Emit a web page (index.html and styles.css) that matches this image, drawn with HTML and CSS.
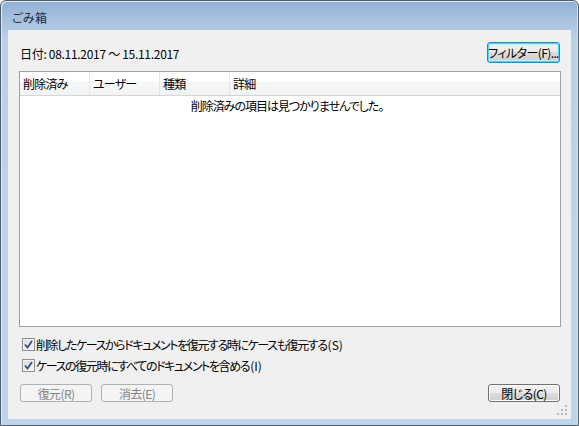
FILE: index.html
```html
<!DOCTYPE html>
<html lang="ja">
<head>
<meta charset="utf-8">
<title>ごみ箱</title>
<link rel="stylesheet" href="styles.css">
</head>
<body>
<div class="window">
  <div class="titlebar"><span class="title">ごみ箱</span></div>
  <div class="client">
    <div class="toprow">
      <span class="date">日付: 08.11.2017 ～ 15.11.2017</span>
      <button class="btn focus">フィルター(F)...</button>
    </div>
    <div class="list">
      <div class="header">
        <div class="col">削除済み</div>
        <div class="col">ユーザー</div>
        <div class="col">種類</div>
        <div class="col last">詳細</div>
      </div>
      <div class="empty">削除済みの項目は見つかりませんでした。</div>
    </div>
    <div class="checks">
      <label class="check"><span class="box"><svg width="9" height="9" viewBox="0 0 9 9"><path d="M1 4.5 L3.5 7.5 L8 1" fill="none" stroke="#3b4f86" stroke-width="1.8"/></svg></span>削除したケースからドキュメントを復元する時にケースも復元する<span class="acc">(S)</span></label>
      <label class="check"><span class="box"><svg width="9" height="9" viewBox="0 0 9 9"><path d="M1 4.5 L3.5 7.5 L8 1" fill="none" stroke="#3b4f86" stroke-width="1.8"/></svg></span>ケースの復元時にすべてのドキュメントを含める<span class="acc">(I)</span></label>
    </div>
    <div class="bottomrow">
      <button class="btn disabled">復元(R)</button>
      <button class="btn disabled">消去(E)</button>
      <span class="spacer"></span>
      <button class="btn">閉じる(C)</button>
    </div>
    <svg class="grip" width="12" height="12" viewBox="0 0 12 12">
      <g fill="#b8b8b8">
        <rect x="9" y="1" width="2" height="2"/>
        <rect x="5" y="5" width="2" height="2"/><rect x="9" y="5" width="2" height="2"/>
        <rect x="1" y="9" width="2" height="2"/><rect x="5" y="9" width="2" height="2"/><rect x="9" y="9" width="2" height="2"/>
      </g>
    </svg>
  </div>
</div>
</body>
</html>
```

FILE: styles.css
```css
* { box-sizing: border-box; }
html, body { margin: 0; padding: 0; background: #ffffff; }
body {
  font-family: "Noto Sans CJK JP", "Noto Sans", sans-serif;
  font-size: 12px;
  font-feature-settings: "palt";
  color: #000;
}
.window {
  width: 579px;
  height: 426px;
  border: 1px solid #4d5d6e;
  border-radius: 6px 6px 0 0;
  background: linear-gradient(to bottom, #93b0d2 0px, #a9c2df 20px, #bad1ea 40px, #bcd4ec 100%);
  padding: 0 7px 6px 7px;
  display: flex;
  flex-direction: column;
  box-shadow: inset 1px 1px 0 #e3ecf6, inset -1px 0 0 #d7e4f2;
}
.titlebar {
  height: 29px;
  display: flex;
  align-items: center;
  padding-left: 4px;
  padding-top: 3px;
}
.title { font-size: 12px; color: #1b2b40; letter-spacing: 0.3px; }
.client {
  flex: 1;
  background: #f0f0f0;
  display: flex;
  flex-direction: column;
  padding: 12px 11px 0 11px;
  position: relative;
}
.toprow {
  display: flex;
  justify-content: space-between;
  align-items: center;
  height: 21px;
}
.date { padding-left: 1px; padding-top: 1px; letter-spacing: -0.3px; }
.btn {
  font-family: inherit;
  font-size: 12px;
  font-feature-settings: "palt";
  letter-spacing: -0.6px;
  white-space: nowrap;
  width: 72px;
  height: 21px;
  padding: 0;
  border: 1px solid #707070;
  border-radius: 3px;
  background: linear-gradient(to bottom, #f2f2f2 0%, #ebebeb 50%, #dddddd 50%, #cfcfcf 100%);
  box-shadow: inset 0 0 0 1px #fcfcfc;
  color: #000;
  line-height: 17px;
}
.btn.focus {
  border-color: #3c7fb1;
  box-shadow: inset 0 0 0 1px #48d8fb, inset 0 0 0 2px #c3ecfb;
  width: 73px;
}
.btn.disabled {
  border-color: #adb2b5;
  background: #f4f4f4;
  box-shadow: none;
  color: #838383;
}
.list {
  margin-top: 8px;
  height: 256px;
  background: #fff;
  border: 1px solid #a0a0a0;
  width: 542px;
}
.header {
  display: flex;
  height: 24px;
  background: linear-gradient(to bottom, #ffffff 0%, #ffffff 40%, #f6f7f9 45%, #f1f2f4 100%);
  border-bottom: 1px solid #d5d5d5;
  letter-spacing: -0.8px;
}
.col {
  width: 70px;
  border-right: 1px solid #e3e5e7;
  padding-left: 3px;
  line-height: 23px;
}
.col.last { border-right: none; flex: 1; }
.empty {
  text-align: center;
  padding-top: 1px;
  line-height: 17px;
  padding-right: 6px;
  letter-spacing: -1px;
}
.checks {
  display: flex;
  flex-direction: column;
  gap: 4px;
  margin-top: 9px;
  padding-left: 3px;
  letter-spacing: -1.4px;
}
.acc { letter-spacing: 0; margin-left: 1px; }
.check {
  display: flex;
  align-items: center;
  height: 17px;
}
.box {
  width: 13px;
  height: 13px;
  border: 1px solid #8e8f8f;
  background: linear-gradient(135deg, #dcdcdc 0%, #f6f6f6 100%);
  box-shadow: inset 0 0 0 1px #f4f4f4;
  display: flex;
  align-items: center;
  justify-content: center;
  margin-right: 1px;
}
.bottomrow {
  display: flex;
  gap: 9px;
  margin-top: 10px;
  padding-left: 1px;
}
.bottomrow .btn { height: 18px; }
.spacer { flex: 1; }
.grip { position: absolute; right: 3px; bottom: 3px; }
```
